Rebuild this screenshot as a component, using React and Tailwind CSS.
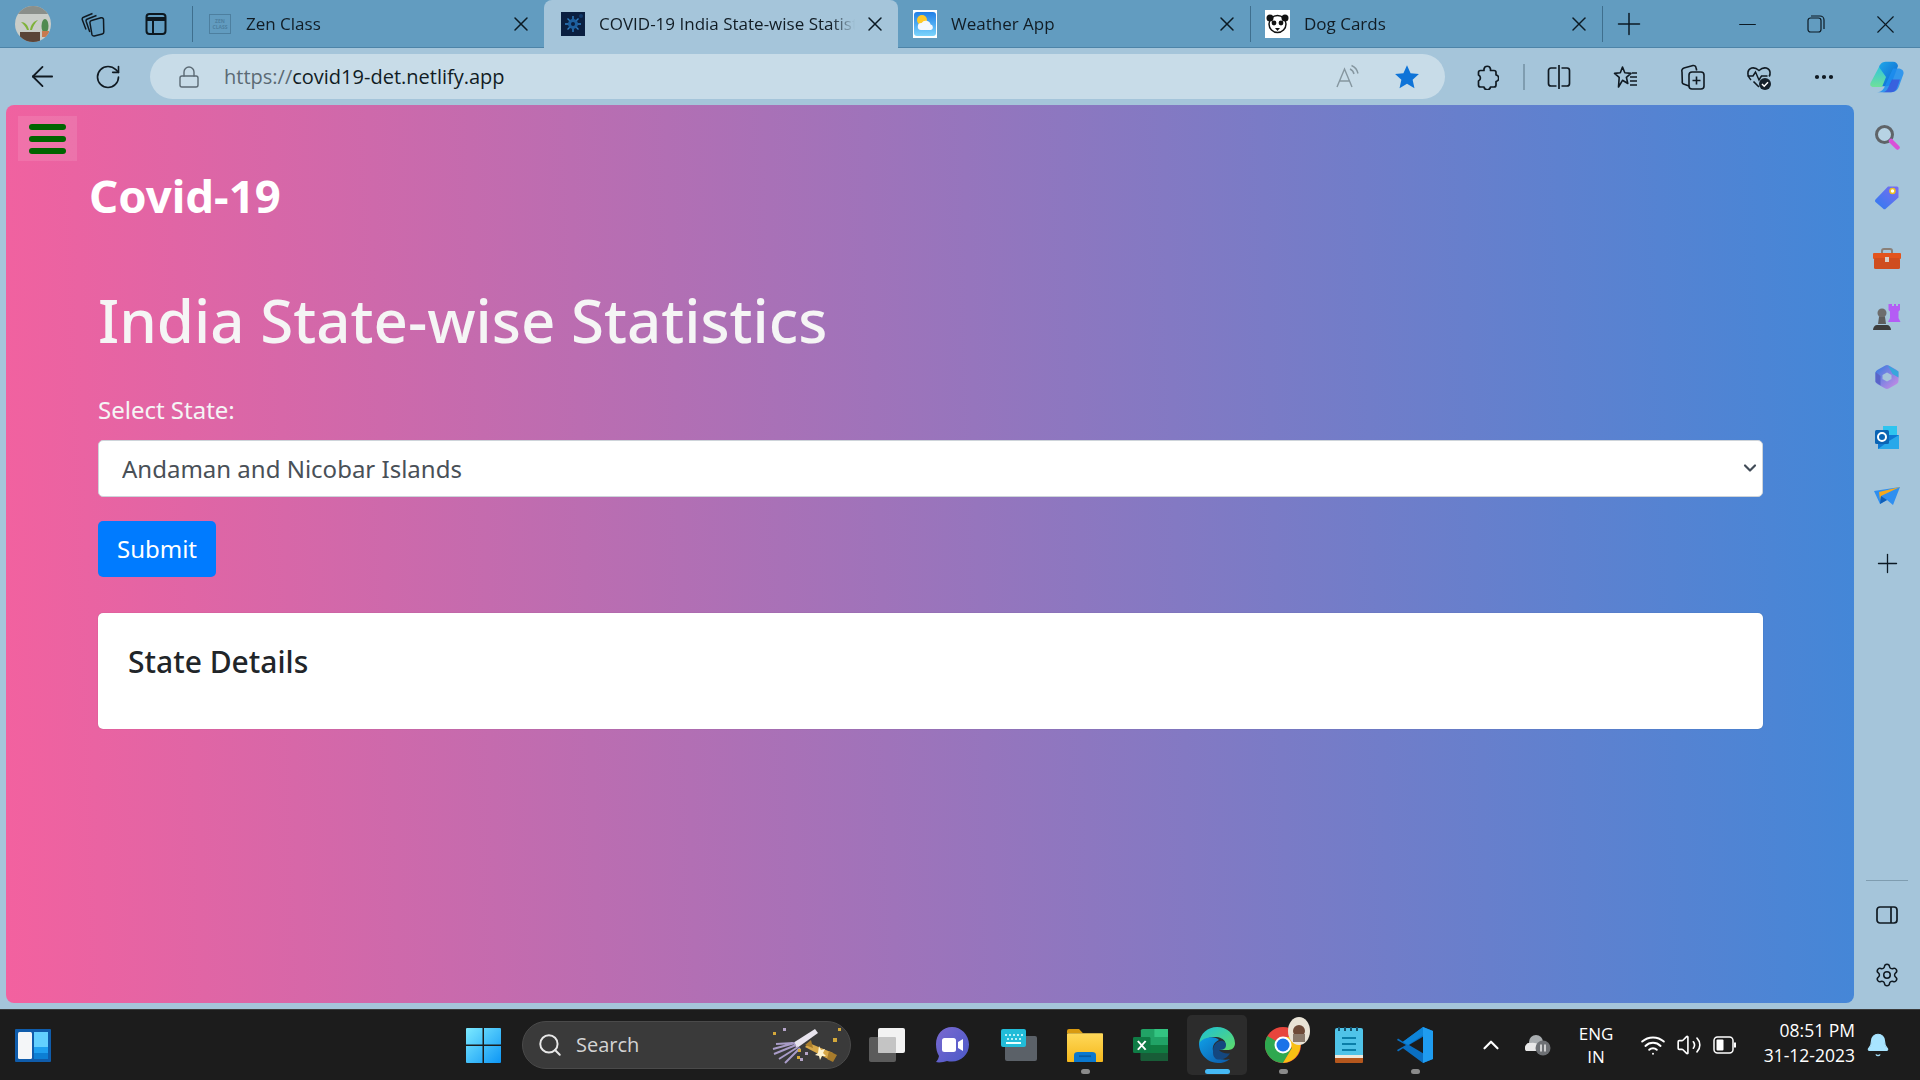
import { ArrowLeft, RotateCw, Lock, X, Plus, Minus, MoreHorizontal, ChevronUp, ChevronDown, Wifi, Volume2, Bell, Settings, Search } from "lucide-react";

const Slot = ({ className = "", children }) => (
    <div className={`flex shrink-0 items-center justify-center ${className}`}>{children}</div>
);

// Favicons
const ZenIcon = () => (
    <div className="flex h-[20px] w-[22px] flex-col items-center justify-center border border-[#4d7f9f] text-[5px] font-bold leading-[6px] text-[#4d7f9f]">
        <span>ZEN</span>
        <span>CLASS</span>
    </div>
);

const VirusIcon = () => (
    <svg width="24" height="24" viewBox="0 0 24 24">
        <rect width="24" height="24" fill="#0a1f40" />
        <g stroke="#2f7fc4" strokeWidth="1.4">
            <path d="M12 4v16M4 12h16M6.5 6.5l11 11M17.5 6.5l-11 11" />
        </g>
        <circle cx="12" cy="12" r="5" fill="#1d5f9e" />
        <circle cx="12" cy="12" r="2" fill="#0a1f40" />
        <circle cx="20" cy="4" r="2" fill="#123a6b" />
    </svg>
);

const WeatherIcon = () => (
    <svg width="24" height="28" viewBox="0 0 24 28">
        <defs>
            <linearGradient id="wsky" x1="0" y1="0" x2="0" y2="1">
                <stop offset="0" stopColor="#1f7fe8" />
                <stop offset="1" stopColor="#7cd4fb" />
            </linearGradient>
        </defs>
        <rect width="24" height="28" fill="#fff" />
        <rect x="1" y="2" width="22" height="24" rx="3" fill="url(#wsky)" />
        <circle cx="9" cy="10" r="5" fill="#ffc928" />
        <path d="M8 20a3.5 3.5 0 0 1 .6-7 5 5 0 0 1 9 1.6 2.8 2.8 0 0 1 .4 5.4z" fill="#f4f8fc" />
    </svg>
);

const DogIcon = () => (
    <svg width="25" height="28" viewBox="0 0 25 28">
        <rect width="25" height="28" fill="#fff" />
        <circle cx="12.5" cy="14" r="8.5" fill="#fff" stroke="#111" strokeWidth="1.5" />
        <circle cx="5" cy="8" r="3.5" fill="#111" />
        <circle cx="20" cy="8" r="3.5" fill="#111" />
        <circle cx="9" cy="13" r="2.4" fill="#111" />
        <circle cx="16" cy="13" r="2.4" fill="#111" />
        <path d="M10 18h5l-2.5 3z" fill="#111" />
    </svg>
);

const Tab = ({ icon, title, active, width, closeGap }) => (
    <div className={`flex items-center ${width} ${active ? "h-[48px] self-end rounded-t-[8px] bg-[#a5c5da]" : "h-[48px]"}`}>
        {icon}
        <span className="min-w-0 flex-1 overflow-hidden text-[17px] whitespace-nowrap text-[#111c24] [mask-image:linear-gradient(to_left,transparent,black_24px)]">{title}</span>
        <X size={24} strokeWidth={1.500} className={`shrink-0 text-[#0c1a24] ${closeGap}`} />
    </div>
);

const Collections = () => (
    <svg width="26" height="26" viewBox="0 0 26 26" fill="none" stroke="#101a22" strokeWidth="1.500" strokeLinejoin="round">
        <path d="M11.500 9.500 21 6.800a2 2 0 0 1 2.500 1.400l.3 12.800a2 2 0 0 1-1.500 2l-8 1.900a2 2 0 0 1-2.400-1.500L9.900 11.500a2 2 0 0 1 1.600-2z" />
        <path d="M9.800 21 6.200 10.500a2 2 0 0 1 1.300-2.500L16.500 4.500" />
        <path d="M6 18.500 2.300 8.800a2 2 0 0 1 1.200-2.600L12.500 2.500" />
    </svg>
);

const TabsIcon = () => (
    <svg width="22" height="24" viewBox="0 0 22 24" fill="none" stroke="#0d1820" strokeWidth="2">
        <rect x="1.500" y="2" width="19" height="20" rx="3" />
        <path d="M1.500 7h19" strokeWidth="4" />
        <path d="M8 7v15" />
    </svg>
);

const ReadAloud = () => (
    <svg width="26" height="26" viewBox="0 0 26 26" fill="none" stroke="#85969f" strokeWidth="1.400">
        <path d="M2 23 9.500 5 17 23M5 17h9" />
        <path d="M15 5a7 7 0 0 1 4 5M16.500 1.500a11 11 0 0 1 6.500 8" />
    </svg>
);

const Star = () => (
    <svg width="26" height="26" viewBox="0 0 24 24">
        <path d="M12 1.200 15.300 8.500 23 9.300 17.200 14.500 18.900 22.300 12 18.300 5.100 22.300 6.800 14.500 1 9.300 8.700 8.500z" fill="#0f74d8" />
    </svg>
);

const PuzzleIcon = () => (
    <svg width="24" height="26" viewBox="0 0 24 26" fill="none" stroke="#101a22" strokeWidth="1.700" strokeLinejoin="round">
        <path d="M9 5a3.300 3.300 0 0 1 6.500 0v1.500H19a2 2 0 0 1 2 2V11a3.300 3.300 0 0 1 0 6.500V21a2 2 0 0 1-2 2h-3.500a3.300 3.300 0 0 1-6.500 0H5.500a2 2 0 0 1-2-2v-4a3.300 3.300 0 0 0 0-6V8.500a2 2 0 0 1 2-2H9z" />
    </svg>
);

const SplitIcon = () => (
    <svg width="24" height="26" viewBox="0 0 24 26" fill="none" stroke="#101a22" strokeWidth="1.700">
        <path d="M12 1v24" />
        <path d="M9.500 4H4a2.500 2.500 0 0 0-2.500 2.500v13A2.500 2.500 0 0 0 4 22h5.500M14.500 4H20a2.500 2.500 0 0 1 2.500 2.500v13A2.500 2.500 0 0 1 20 22h-5.500" />
    </svg>
);

const FavIcon = () => (
    <svg width="26" height="26" viewBox="0 0 26 26" fill="none" stroke="#101a22" strokeWidth="1.600" strokeLinejoin="round">
        <path d="M9.500 3 11.800 8.800 18 9.400 13.400 13.400 14.800 19.500 9.500 16.300 5.500 23 6.200 13.400 1.500 9.400 7.300 8.800z" />
        <path d="M17 13h7M17 17h7M17 21h7M19 9h5" />
    </svg>
);

const CollectionsPlus = () => (
    <svg width="26" height="30" viewBox="0 0 26 30" fill="none" stroke="#101a22" strokeWidth="1.600">
        <rect x="9" y="10" width="15" height="17" rx="3" />
        <path d="M16.500 14.500v8M12.500 18.500h8" />
        <path d="M9 24 3.500 22a2 2 0 0 1-1.200-2.600L2 10a3 3 0 0 1 2-4l9-2.500a2.500 2.500 0 0 1 3 2l.7 3" />
    </svg>
);

const HeartCheck = () => (
    <svg width="26" height="28" viewBox="0 0 26 28" fill="none">
        <path d="M5 17C2.500 14.500 1.500 12 2 9c.6-3.500 5.500-6.500 11-1.500C18.500 2.500 23.500 5.500 24 9c.2 1.500 0 3-.8 4.500M13 24 7.500 18.500" stroke="#101a22" strokeWidth="1.600" />
        <path d="M1.500 13h5.500l2.500-4 3.500 8 2.500-4h6" stroke="#101a22" strokeWidth="1.500" />
        <circle cx="19" cy="21" r="6" fill="#15202a" />
        <path d="m16 21 2.200 2.200 3.800-4" stroke="#fff" strokeWidth="1.500" />
    </svg>
);

const Copilot = () => (
    <svg width="36" height="32" viewBox="0 0 36 38" preserveAspectRatio="none">
        <defs>
            <linearGradient id="cop1" x1="0" y1="0" x2="1" y2="1">
                <stop offset="0" stopColor="#1fa8e8" />
                <stop offset="1" stopColor="#0c5fd0" />
            </linearGradient>
            <linearGradient id="cop2" x1="0" y1="0" x2="0" y2="1">
                <stop offset="0" stopColor="#34c7d8" />
                <stop offset="1" stopColor="#6fe09a" />
            </linearGradient>
        </defs>
        <path d="M11 7C12.500 2.500 15 1 19 1h6c3 0 4.500 2 5 5l-6 19c-1.500 4-3 5-7 5H12z" fill="url(#cop1)" />
        <path d="M11 7 3 25c-1.500 3-1 6 3 6h8l4-12z" fill="url(#cop2)" />
        <path d="M25 9h5c4 0 6 3 5.500 6L31 30c-1.500 5-4 7-8 7H9c3 0 5-1 7-5z" fill="#1d8ef0" opacity="0.85" />
        <path d="M24 22h8l-3 10c-1 3-3 5-6 5h-9c3 0 5-2 6-5z" fill="#3b4fd8" opacity="0.75" />
    </svg>
);

// Edge sidebar apps
const SearchApp = () => (
    <svg width="26" height="26" viewBox="0 0 26 26" fill="none">
        <circle cx="10.500" cy="10.500" r="8" fill="#b7d3e4" stroke="#5f6468" strokeWidth="3" />
        <path d="m17 17 6.500 6.500" stroke="#d94fd8" strokeWidth="4.500" strokeLinecap="round" />
    </svg>
);

const TagApp = () => (
    <svg width="26" height="26" viewBox="0 0 26 26">
        <defs>
            <linearGradient id="tag" x1="0" y1="1" x2="1" y2="0">
                <stop offset="0" stopColor="#2f7cf0" />
                <stop offset="1" stopColor="#7b6cf0" />
            </linearGradient>
        </defs>
        <path d="M1.500 15.500 14 2.500h9a1.500 1.500 0 0 1 1.500 1.500v9.500L12 24.500a2 2 0 0 1-3 0l-7.500-6.500a2 2 0 0 1 0-2.500z" fill="url(#tag)" />
        <circle cx="18.500" cy="7" r="2.500" fill="#fff" stroke="#f0c020" strokeWidth="1.500" />
    </svg>
);

const ToolboxApp = () => (
    <svg width="28" height="22" viewBox="0 0 28 22">
        <path d="M9 6V3a2 2 0 0 1 2-2h6a2 2 0 0 1 2 2v3" fill="none" stroke="#8a8078" strokeWidth="2" />
        <rect y="5" width="28" height="6" rx="1" fill="#e3541d" />
        <rect x="1" y="10" width="26" height="11" rx="1.500" fill="#cf4d1f" />
        <rect x="12" y="9" width="4" height="5" fill="#d8cfc8" />
    </svg>
);

const ChessApp = () => (
    <svg width="28" height="28" viewBox="0 0 28 28">
        <path d="M17 1h2v2h2V1h2v2h2V1h2v6l-1.500 1.500V15l2 4H15l2-4V8.500L15.500 7V1z" fill="#b45cf5" />
        <circle cx="9" cy="10" r="4.500" fill="#6d6d6d" />
        <path d="M6 14h6l1 7H5z" fill="#5d5d5d" />
        <path d="M0 27c0-3 2-5 4-5h10c2 0 4 2 4 5z" fill="#3d3d3d" />
    </svg>
);

const M365App = () => (
    <svg width="24" height="26" viewBox="0 0 24 26" fill="none">
        <defs>
            <linearGradient id="m1" x1="0" y1="0" x2="1" y2="1">
                <stop offset="0" stopColor="#4a7ce0" />
                <stop offset="1" stopColor="#b98ae4" />
            </linearGradient>
        </defs>
        <path d="M12 4.500 20 9v8l-8 4.500L4 17V9z" stroke="url(#m1)" strokeWidth="7" strokeLinejoin="round" />
        <path d="M13 1.500 23.500 7.500v6l-6-3.500z" fill="#37a7dc" />
        <path d="M0.500 8v10l5 3.500V12z" fill="#5a64c8" />
    </svg>
);

const OutlookApp = () => (
    <svg width="24" height="24" viewBox="0 0 24 24">
        <rect x="8" y="1" width="14" height="10" fill="#2ec4ef" />
        <rect x="3" y="10" width="21" height="14" fill="#0f78d4" />
        <path d="M14 16 24 10v14H3z" fill="#28a8ea" />
        <rect y="5" width="14" height="14" rx="1.500" fill="#0a64b4" />
        <circle cx="7" cy="12" r="4" fill="none" stroke="#fff" strokeWidth="2" />
    </svg>
);

const SendApp = () => (
    <svg width="26" height="20" viewBox="0 0 26 20">
        <path d="M0 4 26 0 19 18 13 13 6 17z" fill="#2f8ff0" />
        <path d="M5 5 26 0 7 9 6 13z" fill="#f5a81c" />
        <path d="M7 9 13 13 6 17z" fill="#0f5fb8" />
    </svg>
);

const PanelIcon = () => (
    <svg width="22" height="20" viewBox="0 0 22 20" fill="none" stroke="#101a22" strokeWidth="1.700">
        <rect x="1" y="2" width="20" height="16" rx="3" />
        <path d="M15 2v16" />
    </svg>
);

// Taskbar apps
const Widgets = () => (
    <svg width="36" height="33" viewBox="0 0 36 33">
        <rect width="36" height="33" rx="1" fill="#0f5cab" />
        <rect x="3" y="3" width="14" height="27" rx="1.500" fill="#f4f6f8" />
        <rect x="19" y="3" width="14" height="15" fill="#63d0ff" />
        <rect x="19" y="18" width="14" height="6" fill="#1ea0f0" />
        <rect x="19" y="24" width="14" height="6" fill="#0c7fd4" />
    </svg>
);

const WinLogo = () => (
    <svg width="35" height="35" viewBox="0 0 35 35">
        <defs>
            <linearGradient id="win" x1="0" y1="0" x2="1" y2="1">
                <stop offset="0" stopColor="#7ceaff" />
                <stop offset="1" stopColor="#0d96f5" />
            </linearGradient>
        </defs>
        <path d="M1 0h15.500v16.500H0V1a1 1 0 0 1 1-1zM18 0h16a1 1 0 0 1 1 1v15.500H18zM0 18h16.500v17H1a1 1 0 0 1-1-1zM18 18h17v16a1 1 0 0 1-1 1H18z" fill="url(#win)" />
    </svg>
);

const Confetti = () => (
    <svg width="72" height="40" viewBox="0 0 72 40">
        <path d="M22 18 44 4l3 4-21 15z" fill="#e8e4ee" />
        <path d="M24 18 2 24M25 20 3 29M27 22 8 34M29 23 14 38M22 18 5 19" stroke="#a99cc8" strokeWidth="2" />
        <path d="M34 22 38 18l24 10-3 7z" fill="#d8a848" />
        <path d="M34 20l6-5 2 8zM58 26l8 4-4 7-6-3z" fill="#a87c2c" />
        <path d="m48 21 2 4 4-1-2 4 3 3-4 0-2 4-1-4-4-1 3-2z" fill="#fff4d0" />
        <g fill="#d4a83a">
            <rect x="2" y="7" width="3" height="3" />
            <rect x="67" y="3" width="3" height="3" />
            <rect x="62" y="13" width="4" height="4" />
            <rect x="26" y="31" width="3" height="3" />
            <rect x="27" y="24" width="3" height="3" />
        </g>
        <g fill="#b4a4c8">
            <rect x="12" y="3" width="3" height="3" />
            <rect x="34" y="27" width="3" height="3" />
            <rect x="29" y="33" width="3" height="3" />
        </g>
    </svg>
);

const TaskView = () => (
    <svg width="36" height="34" viewBox="0 0 36 34">
        <rect y="9" width="27" height="25" rx="2" fill="#5b5b5b" />
        <rect x="9" width="27" height="25" rx="2" fill="#f2f2f2" />
        <rect x="9" y="9" width="18" height="16" rx="1" fill="#c4c4c4" />
    </svg>
);

const TeamsIcon = () => (
    <svg width="34" height="36" viewBox="0 0 34 36">
        <defs>
            <linearGradient id="teams" x1="0" y1="0" x2="1" y2="1">
                <stop offset="0" stopColor="#7a6ad0" />
                <stop offset="1" stopColor="#4a58c8" />
            </linearGradient>
        </defs>
        <path d="M17 0C8 0 1 7 1 17c0 5 1 9 3 12-.5 3-2 5-3 6 3 1 8 0 11-1 1.500.4 3 .6 5 .6 9 0 17-7 17-17S26 0 17 0z" fill="url(#teams)" />
        <rect x="7" y="11" width="14" height="14" rx="2.500" fill="#fff" />
        <path d="m23 15 5-3v12l-5-3z" fill="#fff" />
    </svg>
);

const KeyboardIcon = () => (
    <svg width="36" height="32" viewBox="0 0 36 32">
        <rect x="4" y="7" width="32" height="25" rx="2" fill="#5b6168" />
        <rect width="25" height="18" rx="2" fill="#22bcd8" />
        <path d="M4 6h2M8 6h2M12 6h2M16 6h2M20 6h2M6 10h2M10 10h2M14 10h2M18 10h2" stroke="#eaffff" strokeWidth="1.500" />
        <rect x="5" y="13" width="15" height="2" fill="#eaffff" />
    </svg>
);

const Explorer = () => (
    <svg width="36" height="33" viewBox="0 0 36 40" preserveAspectRatio="none">
        <defs>
            <linearGradient id="folder" x1="0" y1="0" x2="0" y2="1">
                <stop offset="0" stopColor="#ffd95a" />
                <stop offset="1" stopColor="#f5b81c" />
            </linearGradient>
        </defs>
        <path d="M0 2a2 2 0 0 1 2-2h10l4 5H0z" fill="#d99a10" />
        <rect y="5" width="36" height="35" rx="1" fill="url(#folder)" />
        <path d="M7 40V32a4 4 0 0 1 4-4h14a4 4 0 0 1 4 4v8z" fill="#0a78d0" />
        <rect x="12" y="32" width="12" height="2" fill="#085aa0" />
    </svg>
);

const Excel = () => (
    <svg width="35" height="32" viewBox="0 0 36 40" preserveAspectRatio="none">
        <rect x="8" width="28" height="40" rx="2" fill="#21a366" />
        <rect x="22" width="14" height="10" fill="#33c481" />
        <rect x="8" y="20" width="28" height="10" fill="#107c41" />
        <rect x="8" y="30" width="28" height="10" fill="#185c37" />
        <rect y="10" width="18" height="20" rx="1.500" fill="#0f7b45" />
        <path d="m5 15 8 11M13 15 5 26" stroke="#fff" strokeWidth="2" />
    </svg>
);

const Edge = () => (
    <svg width="36" height="36" viewBox="0 0 36 44" preserveAspectRatio="none">
        <defs>
            <linearGradient id="edge1" x1="0" y1="0" x2="1" y2="1">
                <stop offset="0" stopColor="#1cc0d8" />
                <stop offset="1" stopColor="#5fdc68" />
            </linearGradient>
            <linearGradient id="edge2" x1="0" y1="0" x2="1" y2="1">
                <stop offset="0" stopColor="#0f9fe8" />
                <stop offset="1" stopColor="#0c59a8" />
            </linearGradient>
        </defs>
        <path d="M0 20C1 8 9 0 18 0c10 0 18 9 18 20 0 6-4 9-8 8h-8c6-2 7-6 6-10C24 12 12 8 0 20z" fill="url(#edge1)" />
        <path d="M0 20c0 14 9 24 19 24 4 0 8-1 12-5-7 3-15-1-17-10-1-6 2-11 6-13C16 10 4 12 0 20z" fill="url(#edge2)" />
        <path d="M14 29c0-8 5-13 10-12 3 1 4 5 2 9-2 2-4 2-6 2 2 3 7 5 11 4-3 7-10 9-14 7-3-3-3-6-3-10z" fill="#14477f" />
    </svg>
);

const Chrome = () => (
    <div className="relative h-[36px] w-[36px]">
        <svg width="36" height="36" viewBox="0 0 36 36">
            <circle cx="18" cy="18" r="18" fill="#e8453c" />
            <path d="M18 18 2.400 9A18 18 0 0 0 18 36l9-15z" fill="#2fa84f" />
            <path d="M18 10h15.600A18 18 0 0 1 18 36l9-15z" fill="#f9c013" />
            <circle cx="18" cy="18" r="8.500" fill="#fff" />
            <circle cx="18" cy="18" r="6.500" fill="#1b73e8" />
        </svg>
        <svg width="24" height="30" viewBox="0 0 24 30" className="absolute -top-[11px] -right-[10px]">
            <ellipse cx="12" cy="15" rx="11" ry="14" fill="#e9e3d6" />
            <circle cx="12" cy="15" r="6" fill="#6e4a38" />
            <rect x="6" y="18" width="12" height="8" fill="#8a7a6c" />
        </svg>
    </div>
);

const Notepad = () => (
    <svg width="28" height="36" viewBox="0 0 28 36">
        <rect y="1" width="28" height="30" rx="2" fill="#4fc3e8" />
        <rect y="30" width="28" height="6" rx="1" fill="#b5571d" />
        <rect y="28" width="28" height="3" fill="#efe9dc" />
        <path d="M7 11h14M7 17h14M7 23h14" stroke="#0a7ea8" strokeWidth="2" />
        <path d="M4 0v4M10 0v4M16 0v4M22 0v4" stroke="#14506b" strokeWidth="2" />
    </svg>
);

const VSCode = () => (
    <svg width="36" height="36" viewBox="0 0 36 44" preserveAspectRatio="none">
        <path d="M26 0 36 5v34l-10 5L6 26l-5 4-1-2 9-6-9-6 1-2 5 4z" fill="#0a6fc2" />
        <path d="M26 0 36 5v34l-10 5z" fill="#1f9cf0" />
        <path d="M26 12 12 22l14 10z" fill="#1c1c1c" />
        <path d="M26 0 6 18l5 4L26 10z" fill="#0e84d8" />
    </svg>
);

const OneDrive = () => (
    <svg width="26" height="24" viewBox="0 0 26 24">
        <circle cx="11" cy="9" r="7" fill="#a9adb0" />
        <path d="M1 18a5 5 0 0 1 5-8c5-1 10 2 11 8z" fill="#e8e8e8" />
        <circle cx="18" cy="15" r="7.500" fill="#6d7074" />
        <path d="M16 11.500v7M20 11.500v7" stroke="#eee" strokeWidth="1.500" />
    </svg>
);

const Battery = () => (
    <svg width="24" height="20" viewBox="0 0 24 20" fill="none">
        <rect x="1" y="2" width="19" height="16" rx="3.500" stroke="#fff" strokeWidth="1.500" />
        <rect x="3.500" y="4.500" width="7" height="11" rx="1" fill="#fff" />
        <path d="M22 7.500v5" stroke="#fff" strokeWidth="2" />
    </svg>
);

const TaskbarApp = ({ className = "", children, open, active }) => (
    <div className={`relative flex h-[60px] w-[60px] shrink-0 items-center justify-center rounded-[5px] ${active ? "bg-[#2c2c2c]" : ""} ${className}`}>
        {children}
        {open && <span className="absolute bottom-[1px] left-[26px] h-[5px] w-[9px] rounded-full bg-[#8a8a8a]" />}
        {active && <span className="absolute bottom-[1px] left-[18px] h-[5px] w-[25px] rounded-full bg-[#45b9f5]" />}
    </div>
);

const App = () => {
    return (
        <div className="flex h-screen w-[1920px] flex-col overflow-hidden bg-[#a5c5da] [font-family:'Noto_Sans',sans-serif]">
            {/* Tab strip */}
            <div className="flex h-[48px] shrink-0 items-center bg-[#629cc0] shadow-[inset_0_-1px_0_#4d84a8] [font-family:'Open_Sans',sans-serif]">
                <Slot className="ml-[15px] w-[36px]">
                    <svg width="36" height="36" viewBox="0 0 36 36">
                        <defs>
                            <clipPath id="avatar">
                                <ellipse cx="18" cy="18" rx="18" ry="18" />
                            </clipPath>
                        </defs>
                        <g clipPath="url(#avatar)">
                            <rect width="36" height="36" fill="#c9cdc8" />
                            <rect width="36" height="8" fill="#8a8f8a" />
                            <path d="M14 24c-1-5-4-8-8-8 3 3 5 5 6 8zM15 24c1-6 4-9 8-10-3 3-5 6-6 10z" fill="#7fb23a" />
                            <ellipse cx="30" cy="20" rx="3.500" ry="7" fill="#4f8a50" />
                            <rect x="5" y="26" width="20" height="10" fill="#5a4438" />
                            <rect x="27" y="25" width="7" height="6" fill="#c87a50" />
                        </g>
                    </svg>
                </Slot>
                <Slot className="ml-[29px] w-[26px]"><Collections /></Slot>
                <Slot className="ml-[38px] w-[24px]"><TabsIcon /></Slot>
                <div className="ml-[24px] h-[36px] w-px bg-[#3f6f8e]" />
                <Tab
                    width="w-[351px] pl-[16px]"
                    icon={<Slot className="mr-[15px] w-[22px]"><ZenIcon /></Slot>}
                    title="Zen Class"
                    closeGap="mr-[11px]"
                />
                <Tab
                    active
                    width="w-[354px] pl-[17px]"
                    icon={<Slot className="mr-[14px] w-[24px]"><VirusIcon /></Slot>}
                    title="COVID-19 India State-wise Statistics"
                    closeGap="ml-[8px] mr-[11px]"
                />
                <Tab
                    width="w-[352px] pl-[15px]"
                    icon={<Slot className="mr-[14px] w-[24px]"><WeatherIcon /></Slot>}
                    title="Weather App"
                    closeGap="mr-[11px]"
                />
                <div className="h-[36px] w-px bg-[#3f6f8e]" />
                <Tab
                    width="w-[351px] pl-[14px]"
                    icon={<Slot className="mr-[14px] w-[25px]"><DogIcon /></Slot>}
                    title="Dog Cards"
                    closeGap="mr-[11px]"
                />
                <div className="h-[36px] w-px bg-[#3f6f8e]" />
                <Slot className="ml-[14px] w-[24px]"><Plus size={36} strokeWidth={1} className="shrink-0 text-[#0c1a24]" /></Slot>
                <Slot className="ml-[94px] w-[24px]"><Minus size={27} strokeWidth={1} className="shrink-0 text-[#0c1a24]" /></Slot>
                <Slot className="ml-[45px] w-[24px]">
                    <svg width="18" height="18" viewBox="0 0 18 18" fill="none" stroke="#0c1a24" strokeWidth="1.200">
                        <rect x="1" y="3" width="13" height="14" rx="2.500" />
                        <path d="M4 1h9a4 4 0 0 1 4 4v9" />
                    </svg>
                </Slot>
                <Slot className="ml-[45px] w-[24px]"><X size={31} strokeWidth={0.900} className="shrink-0 text-[#0c1a24]" /></Slot>
            </div>

            {/* Toolbar */}
            <div className="flex h-[57px] shrink-0 items-center">
                <Slot className="ml-[9px] w-[66px]"><ArrowLeft size={33} strokeWidth={1.300} className="text-[#101a22]" /></Slot>
                <Slot className="w-[66px]"><RotateCw size={28} strokeWidth={1.400} className="text-[#101a22]" /></Slot>
                <div className="ml-[9px] flex h-[45px] w-[1295px] shrink-0 items-center rounded-full bg-[#c8dce8] [font-family:'Open_Sans',sans-serif]">
                    <Slot className="ml-[27px] w-[24px]"><Lock size={24} strokeWidth={1.400} className="text-[#5b6a74]" /></Slot>
                    <span className="ml-[23px] flex-1 text-[20px] text-[#111c24]"><span className="text-[#5b6a74]">https://</span>covid19-det.netlify.app</span>
                    <Slot className="w-[26px]"><ReadAloud /></Slot>
                    <Slot className="ml-[33px] mr-[25px] w-[26px]"><Star /></Slot>
                </div>
                <Slot className="ml-[15px] w-[54px]"><PuzzleIcon /></Slot>
                <div className="ml-[9px] h-[26px] w-[2px] bg-[#7f9db0]" />
                <Slot className="ml-[7px] w-[54px]"><SplitIcon /></Slot>
                <Slot className="ml-[13px] w-[54px]"><FavIcon /></Slot>
                <Slot className="ml-[13px] w-[54px]"><CollectionsPlus /></Slot>
                <Slot className="ml-[12px] w-[54px]"><HeartCheck /></Slot>
                <Slot className="ml-[11px] w-[54px]"><MoreHorizontal size={24} strokeWidth={2.200} className="text-[#101a22]" /></Slot>
                <Slot className="ml-[8px] w-[54px]"><Copilot /></Slot>
            </div>

            {/* Page + edge sidebar */}
            <div className="flex min-h-0 flex-1">
                <main className="ml-[6px] mb-[6px] w-[1848px] shrink-0 rounded-[8px] bg-[linear-gradient(88deg,#f3619f,#4287d8)]">
                    <button type="button" className="mt-[11px] ml-[12px] flex h-[45px] w-[59px] flex-col items-center justify-center gap-[6px] bg-white/10">
                        <span className="h-[6px] w-[37px] rounded-[3px] bg-[#006400]" />
                        <span className="h-[6px] w-[37px] rounded-[3px] bg-[#006400]" />
                        <span className="h-[6px] w-[37px] rounded-[3px] bg-[#006400]" />
                    </button>
                    <h2 className="mt-[4px] ml-[83px] text-[45.500px] leading-[60px] font-bold text-white">Covid-19</h2>
                    <div className="ml-[92px] w-[1665px]">
                        <h1 className="mt-[55px] text-[60px] leading-[80px] font-medium text-[#f5f5f5]">India State-wise Statistics</h1>
                        <label className="mt-[32px] block text-[24px] leading-[36px] text-[#f5f5f5]">Select State:</label>
                        <div className="relative mt-[12px]">
                            <select defaultValue="Andaman and Nicobar Islands" className="block h-[57px] w-full appearance-none rounded-[5px] border border-[#ced4da] bg-white pl-[23px] text-[24px] text-[#495057]">
                                <option>Andaman and Nicobar Islands</option>
                                <option>Andhra Pradesh</option>
                                <option>Assam</option>
                            </select>
                            <ChevronDown size={20} strokeWidth={2.600} className="pointer-events-none absolute top-[18px] right-[3px] text-[#414b57]" />
                        </div>
                        <button type="button" className="mt-[24px] block h-[56px] w-[118px] rounded-[5px] bg-[#007bff] text-[24px] text-white">Submit</button>
                        <section className="mt-[36px] h-[116px] rounded-[5px] bg-white px-[30px] pt-[27px] shadow-[0_0_1px_rgba(0,0,0,0.3)]">
                            <h3 className="text-[30px] leading-[44px] font-medium text-[#212529]">State Details</h3>
                        </section>
                    </div>
                </main>
                <aside className="flex w-[66px] flex-col items-center">
                    <Slot className="mt-[2px] h-[60px]"><SearchApp /></Slot>
                    <Slot className="h-[60px]"><TagApp /></Slot>
                    <Slot className="h-[60px] pt-[3px]"><ToolboxApp /></Slot>
                    <Slot className="h-[60px]"><ChessApp /></Slot>
                    <Slot className="h-[60px]"><M365App /></Slot>
                    <Slot className="h-[60px]"><OutlookApp /></Slot>
                    <Slot className="h-[60px]"><SendApp /></Slot>
                    <Slot className="mt-[6px] h-[60px]"><Plus size={31} strokeWidth={1} className="text-[#0c1a24]" /></Slot>
                    <div className="mt-auto h-px w-[42px] bg-[#7f9db0]" />
                    <Slot className="mt-[4px] h-[60px]"><PanelIcon /></Slot>
                    <Slot className="mb-[4px] h-[60px]"><Settings size={26} strokeWidth={1.400} className="text-[#101a22]" /></Slot>
                </aside>
            </div>

            {/* Windows taskbar */}
            <div className="flex h-[71px] shrink-0 items-center border-t border-[#3a3a3a] bg-[#1c1c1c] text-white [font-family:'Open_Sans',sans-serif]">
                <Slot className="ml-[15px] w-[36px]"><Widgets /></Slot>
                <Slot className="ml-[415px] w-[35px]"><WinLogo /></Slot>
                <div className="ml-[21px] flex h-[48px] w-[329px] shrink-0 items-center rounded-full border border-[#4a4a4a] bg-[#3a3a3a] pr-[7px] pl-[14px]">
                    <Search size={26} strokeWidth={1.800} className="text-[#e8e8e8]" />
                    <span className="ml-[13px] flex-1 text-[20px] text-[#d4d4d4]">Search</span>
                    <Confetti />
                </div>
                <TaskbarApp className="ml-[6px]"><TaskView /></TaskbarApp>
                <TaskbarApp className="ml-[5px]"><TeamsIcon /></TaskbarApp>
                <TaskbarApp className="ml-[7px]"><KeyboardIcon /></TaskbarApp>
                <TaskbarApp className="ml-[6px]" open><Explorer /></TaskbarApp>
                <TaskbarApp className="ml-[5px]"><Excel /></TaskbarApp>
                <TaskbarApp className="ml-[7px]" active><Edge /></TaskbarApp>
                <TaskbarApp className="ml-[6px]" open><Chrome /></TaskbarApp>
                <TaskbarApp className="ml-[6px]"><Notepad /></TaskbarApp>
                <TaskbarApp className="ml-[6px]" open><VSCode /></TaskbarApp>
                <Slot className="ml-[31px] w-[30px]"><ChevronUp size={26} strokeWidth={2} /></Slot>
                <Slot className="ml-[17px] w-[30px]"><OneDrive /></Slot>
                <div className="ml-[18px] w-[50px] shrink-0 text-center text-[17px] leading-[23px]">ENG<br />IN</div>
                <Slot className="ml-[17px] w-[30px]"><Wifi size={26} strokeWidth={1.800} /></Slot>
                <Slot className="ml-[6px] w-[30px]"><Volume2 size={26} strokeWidth={1.500} /></Slot>
                <Slot className="ml-[6px] w-[30px]"><Battery /></Slot>
                <div className="ml-[15px] w-[100px] shrink-0 pb-[4px] text-right text-[17.500px] leading-[25px]">08:51 PM<br />31-12-2023</div>
                <Slot className="ml-[8px] w-[30px]"><Bell size={26} fill="#a8e4ff" strokeWidth={1} className="text-[#a8e4ff]" /></Slot>
            </div>
        </div>
    );
};

export default App;
